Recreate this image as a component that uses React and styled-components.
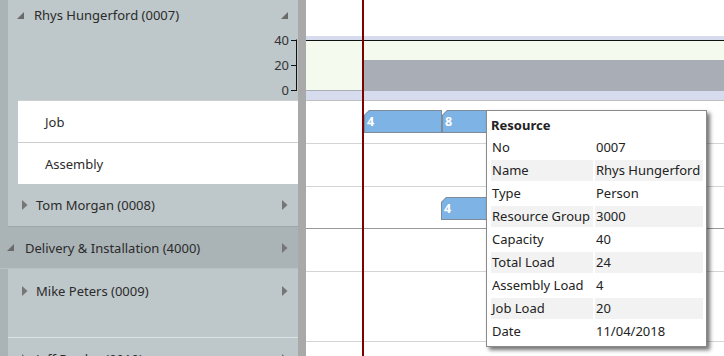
import React from "react";
import styled, { createGlobalStyle } from "styled-components";

const Global = createGlobalStyle`
  html, body { margin: 0; padding: 0; background: #ffffff; }
  body { width: 724px; height: 356px; overflow: hidden; font-family: "Noto Sans", "Open Sans", sans-serif; }
`;

const C = {
  panel: "#bec7ca",
  dark: "#aab3b6",
  text: "#2b2b2b",
};

const Page = styled.div`
  display: flex;
  width: 724px;
  height: 356px;
  overflow: hidden;
  font-size: 13px;
  color: ${C.text};
`;

const Left = styled.div`
  width: 298px;
  flex: none;
  display: flex;
  flex-direction: column;
  background: ${C.dark};
  overflow: hidden;
`;

const Splitter = styled.div`
  width: 8px;
  flex: none;
  background: #a9a9a9;
`;

const GroupBody = styled.div`
  flex: none;
  padding-left: 8px;
  display: flex;
  flex-direction: column;
`;

const ResourceHeader = styled.div`
  flex: none;
  height: 100px;
  background: ${C.panel};
  display: flex;
  flex-direction: column;
`;

const TitleBar = styled.div`
  height: ${(p) => p.$h || 30}px;
  flex: none;
  display: flex;
  align-items: center;
  padding: 0 ${(p) => p.$pr ?? 10}px 0 ${(p) => p.$pl ?? 9}px;
  gap: ${(p) => p.$gap ?? 8}px;
  white-space: nowrap;
`;

const Label = styled.span`
  flex: 1;
  line-height: 18px;
`;

const AxisArea = styled.div`
  flex: 1;
  display: flex;
  justify-content: flex-end;
`;

const Children = styled.div`
  flex: none;
  padding-left: 10px;
  background: ${C.panel};
  display: flex;
  flex-direction: column;
`;

const ChildRow = styled.div`
  flex: none;
  height: 41px;
  border-top: 1px solid #cdcdcd;
  background: #ffffff;
  display: flex;
  align-items: center;
  padding-left: 27px;
`;

const ResourceRow = styled.div`
  flex: none;
  height: ${(p) => p.$h}px;
  background: ${C.panel};
  border-bottom: 1px solid ${(p) => p.$line || "transparent"};
  display: flex;
  flex-direction: column;
`;

const GroupHeader = styled.div`
  flex: none;
  height: 41px;
  background: ${C.dark};
  border-bottom: 1px solid #b9c1c4;
  display: flex;
  align-items: center;
  padding: 0 10px 0 7px;
  gap: 11px;
  white-space: nowrap;
`;

const Chart = styled.div`
  flex: 1;
  position: relative;
  display: flex;
  flex-direction: column;
  background: #ffffff;
  overflow: hidden;
`;

const LoadRow = styled.div`
  height: 100px;
  flex: none;
  display: flex;
  flex-direction: column;
  justify-content: flex-end;
`;

const ChartRow = styled.div`
  position: relative;
  flex: none;
  height: ${(p) => p.$h}px;
  border-top: 1px solid ${(p) => p.$top || "transparent"};
  border-bottom: 1px solid ${(p) => p.$bottom || "transparent"};
`;

const BarOuter = styled.div`
  position: absolute;
  top: ${(p) => p.$top}px;
  left: ${(p) => p.$left}px;
  width: ${(p) => p.$width}px;
  height: 23px;
  background: #7e8b99;
  clip-path: polygon(5px 0, 100% 0, 100% 100%, 0 100%, 0 5px);
  display: flex;
`;

const BarInner = styled.div`
  flex: 1;
  margin: 1px;
  background: #7db3e5;
  clip-path: polygon(4.3px 0, 100% 0, 100% 100%, 0 100%, 0 4.3px);
  color: #ffffff;
  font-weight: 700;
  font-size: 12.5px;
  line-height: 21px;
  padding-left: 2px;
`;

const TodayLine = styled.div`
  position: absolute;
  top: 0;
  bottom: 0;
  left: 56px;
  width: 2px;
  background: #800000;
  z-index: 2;
`;

const Tooltip = styled.div`
  position: absolute;
  left: 180px;
  top: 110px;
  width: 212px;
  padding: 3px 3px 4px 4px;
  background: #ffffff;
  border: 1px solid #8a8a8a;
  box-shadow: 3px 3px 4px rgba(0, 0, 0, 0.55);
  z-index: 3;
  color: #222;
`;

const TipTitle = styled.div`
  font-weight: 700;
  height: 23px;
  line-height: 22px;
`;

const TipGrid = styled.div`
  display: grid;
  grid-template-columns: 102px 1fr;
  column-gap: 2px;
  row-gap: 2px;
`;

const TipCell = styled.div`
  height: 21px;
  line-height: 21px;
  padding-left: 1px;
  background: ${(p) => (p.$alt ? "#f2f2f2" : "transparent")};
  white-space: nowrap;
`;

const Tri = ({ dir }) =>
  dir === "down" ? (
    <svg width="7" height="7" viewBox="0 0 7 7">
      <path d="M7 0 L7 7 L0 7 Z" fill="#6a6a6a" />
    </svg>
  ) : (
    <svg width="6" height="10" viewBox="0 0 6 10">
      <path d="M0 0 L5.5 5 L0 10 Z" fill="#767676" />
    </svg>
  );

const Axis = () => (
  <svg width="44" height="70" viewBox="0 0 44 70">
    <g fill="#333" fontSize="13" fontFamily="Noto Sans, sans-serif" textAnchor="end">
      <text x="35" y="15">40</text>
      <text x="35" y="40">20</text>
      <text x="35" y="65">0</text>
    </g>
    <g stroke="#111" strokeWidth="1" fill="none">
      <path d="M42.5 9.5 V60.5" />
      <path d="M37 10.5 H43 M37 35.5 H43 M37 60.5 H43" />
    </g>
  </svg>
);

const LoadChart = () => (
  <svg width="418" height="64" viewBox="0 0 418 64" style={{ display: "block" }}>
    <rect x="0" y="0" width="418" height="64" fill="#d6dcee" />
    <rect x="0" y="4" width="418" height="51" fill="#f4fbee" />
    <rect x="0" y="4" width="418" height="1" fill="#111" />
    <rect x="58" y="24" width="360" height="31" fill="#a9adb6" />
    <rect x="0" y="54" width="418" height="1" fill="#a9adb6" />
  </svg>
);

const tipRows = [
  ["No", "0007"],
  ["Name", "Rhys Hungerford"],
  ["Type", "Person"],
  ["Resource Group", "3000"],
  ["Capacity", "40"],
  ["Total Load", "24"],
  ["Assembly Load", "4"],
  ["Job Load", "20"],
  ["Date", "11/04/2018"],
];

export default function App() {
  return (
    <>
      <Global />
      <Page>
        <Left>
          <GroupBody>
            <ResourceHeader>
              <TitleBar $h={30} $gap={10}>
                <Tri dir="down" />
                <Label>Rhys Hungerford (0007)</Label>
                <Tri dir="down" />
              </TitleBar>
              <AxisArea>
                <Axis />
              </AxisArea>
            </ResourceHeader>
            <Children>
              <ChildRow>Job</ChildRow>
              <ChildRow>Assembly</ChildRow>
            </Children>
            <ResourceRow $h={42} $line="#9ea6a9">
              <TitleBar $h={42} $pl={14}>
                <Tri dir="right" />
                <Label>Tom Morgan (0008)</Label>
                <Tri dir="right" />
              </TitleBar>
            </ResourceRow>
          </GroupBody>
          <GroupHeader>
            <Tri dir="down" />
            <Label>Delivery &amp; Installation (4000)</Label>
            <Tri dir="right" />
          </GroupHeader>
          <GroupBody>
            <ResourceRow $h={68} $line="#dbe0e1">
              <TitleBar $h={44} $pl={14}>
                <Tri dir="right" />
                <Label>Mike Peters (0009)</Label>
                <Tri dir="right" />
              </TitleBar>
            </ResourceRow>
            <ResourceRow $h={42}>
              <TitleBar $h={42} $pl={14}>
                <Tri dir="right" />
                <Label>Jeff Rawley (0010)</Label>
                <Tri dir="right" />
              </TitleBar>
            </ResourceRow>
          </GroupBody>
        </Left>
        <Splitter />
        <Chart>
          <LoadRow>
            <LoadChart />
          </LoadRow>
          <ChartRow $h={41} $top="#c0c0c0">
            <BarOuter $top={9} $left={58} $width={78}>
              <BarInner>4</BarInner>
            </BarOuter>
            <BarOuter $top={9} $left={136} $width={78}>
              <BarInner>8</BarInner>
            </BarOuter>
            <BarOuter $top={9} $left={214} $width={78}>
              <BarInner>4</BarInner>
            </BarOuter>
          </ChartRow>
          <ChartRow $h={41} $top="#d4d4d4" />
          <ChartRow $h={41} $top="#d4d4d4" $bottom="#9a9a9a">
            <BarOuter $top={10} $left={135} $width={78}>
              <BarInner>4</BarInner>
            </BarOuter>
          </ChartRow>
          <ChartRow $h={41} $bottom="#d4d4d4" />
          <ChartRow $h={68} $bottom="#d4d4d4" />
          <ChartRow $h={42} />
          <TodayLine />
          <Tooltip>
            <TipTitle>Resource</TipTitle>
            <TipGrid>
              {tipRows.map(([k, v], i) => (
                <React.Fragment key={k}>
                  <TipCell $alt={i % 2 === 1}>{k}</TipCell>
                  <TipCell $alt={i % 2 === 1}>{v}</TipCell>
                </React.Fragment>
              ))}
            </TipGrid>
          </Tooltip>
        </Chart>
      </Page>
    </>
  );
}
